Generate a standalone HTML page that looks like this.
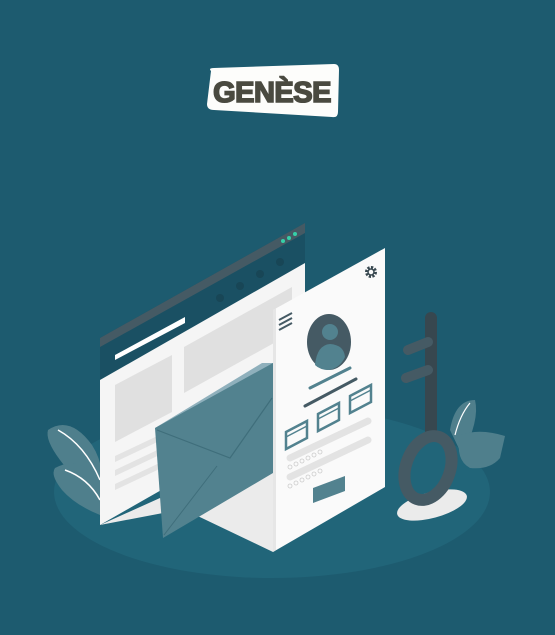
<!DOCTYPE html>
<html><head><meta charset="utf-8"><style>
html,body{margin:0;padding:0;width:555px;height:635px;overflow:hidden;background:#1d5b6f}
</style></head><body>
<svg width="555" height="635" viewBox="0 0 555 635" xmlns="http://www.w3.org/2000/svg">
<rect width="555" height="635" fill="#1d5b6f"/>
<!-- logo -->
<path d="M211 71 Q208 68 214 68 L334 64 Q339 64 339 70 L338 112 Q338 118 332 117 L214 110 Q207 110 207 104 Z" fill="#fdfdfb"/>
<text x="272" y="102" text-anchor="middle" font-family="Liberation Sans, sans-serif" font-weight="bold" font-size="29" fill="#4a4a40" stroke="#4a4a40" stroke-width="1.6" letter-spacing="-0.5">GENÈSE</text>
<!-- platform -->
<ellipse cx="272" cy="492" rx="218" ry="86" fill="#22667a" opacity="0.9"/>
<!-- plants left -->
<path d="M48 430 Q70 415 92 445 Q108 470 100 505 Q75 480 60 460 Q45 440 48 430Z" fill="#4f7f8c"/>
<path d="M55 468 Q80 455 98 480 Q108 500 100 515 Q75 505 62 490 Q50 475 55 468Z" fill="#4f7f8c"/>
<path d="M58 430 Q85 445 100 480" stroke="#fff" stroke-width="1.5" fill="none"/>
<path d="M65 470 Q88 478 100 500" stroke="#fff" stroke-width="1.5" fill="none"/>
<!-- plant right -->
<path d="M450 430 Q455 400 475 400 Q480 420 462 455Z" fill="#4f7f8c"/>
<path d="M460 435 Q480 428 505 436 L500 458 Q490 470 470 468 Q455 460 460 435Z" fill="#4f7f8c"/>
<path d="M470 403 Q460 415 455 435" stroke="#fff" stroke-width="1.2" fill="none"/>
<!-- floor -->
<polygon points="100,525 160,498 273,552 273,470 205,505" fill="#ebebeb"/>
<!-- browser -->
<polygon points="100,338 305,223 305,263 100,380" fill="#1a5063"/>
<polygon points="100,338 305,223 305,233 100,347" fill="#455a64"/>
<circle cx="283" cy="241" r="2" fill="#35d0a8"/><circle cx="289" cy="238" r="2" fill="#35d0a8"/><circle cx="295" cy="234" r="2" fill="#35d0a8"/>
<circle cx="220" cy="298" r="4" fill="#184656"/><circle cx="240" cy="286" r="4" fill="#184656"/><circle cx="260" cy="274" r="4" fill="#184656"/><circle cx="280" cy="262" r="4" fill="#184656"/>
<polygon points="115,355 185,317 185,323 115,360" fill="#fff"/>
<polygon points="100,380 305,263 305,408 100,525" fill="#f5f5f5"/>
<polygon points="115,385 172,355 172,412 115,442" fill="#e0e0e0"/>
<polygon points="184,347 292,287 292,333 184,393" fill="#e0e0e0"/>
<polygon points="115,456 170,430 170,436 115,462" fill="#e3e3e3"/>
<polygon points="115,470 170,444 170,450 115,476" fill="#e3e3e3"/>
<polygon points="115,484 170,458 170,464 115,490" fill="#e3e3e3"/>
<!-- envelope -->
<polygon points="155,428 262,363 273,363 273,395 170,450" fill="#8fb0bc"/>
<polygon points="155,428 273,363 273,473 163,538" fill="#52828f"/>
<polyline points="157,430 230,458 272,398" stroke="#3f6e7b" stroke-width="1.2" fill="none"/>
<line x1="164" y1="535" x2="217" y2="466" stroke="#3f6e7b" stroke-width="1"/>
<!-- card -->
<polygon points="273,310 385,248 385,487 273,552" fill="#fafafa"/>
<polygon points="273,310 276,308 276,550 273,552" fill="#e6e6e6"/>
<g stroke="#455a64" stroke-width="2"><line x1="279" y1="320" x2="292" y2="313"/><line x1="279" y1="325" x2="292" y2="318"/><line x1="279" y1="330" x2="292" y2="323"/></g>
<circle cx="371" cy="272" r="4.5" fill="none" stroke="#37474f" stroke-width="3" stroke-dasharray="2.2 1.3"/>
<circle cx="371" cy="272" r="3" fill="none" stroke="#37474f" stroke-width="1.5"/>
<ellipse cx="329" cy="342" rx="22" ry="28" fill="#455a64"/>
<circle cx="330" cy="332" r="8" fill="#52828f"/>
<path d="M315 365 Q317 345 330 344 Q344 345 345 357 Q340 368 329 370 Q320 370 315 365Z" fill="#52828f"/>
<line x1="310" y1="388" x2="350" y2="368" stroke="#52828f" stroke-width="3" stroke-linecap="round"/>
<line x1="305" y1="406" x2="356" y2="379" stroke="#455a64" stroke-width="3" stroke-linecap="round"/>
<g fill="none" stroke="#52828f" stroke-width="2.5">
<polygon points="286,432 307,421 307,438 286,449"/><polygon points="318,414 339,403 339,420 318,431"/><polygon points="350,396 371,385 371,402 350,413"/>
</g>
<g stroke="#52828f" stroke-width="1.5"><line x1="286" y1="437" x2="307" y2="426"/><line x1="318" y1="419" x2="339" y2="408"/><line x1="350" y1="401" x2="371" y2="390"/></g>
<line x1="290" y1="458" x2="368" y2="421" stroke="#e3e3e3" stroke-width="7" stroke-linecap="round"/>
<line x1="290" y1="477" x2="368" y2="440" stroke="#e3e3e3" stroke-width="7" stroke-linecap="round"/>
<g fill="#fafafa" stroke="#ccc" stroke-width="0.8"><circle cx="290" cy="467" r="2"/><circle cx="296" cy="464" r="2"/><circle cx="302" cy="461" r="2"/><circle cx="308" cy="458" r="2"/><circle cx="314" cy="455" r="2"/><circle cx="320" cy="452" r="2"/><circle cx="290" cy="486" r="2"/><circle cx="296" cy="483" r="2"/><circle cx="302" cy="480" r="2"/><circle cx="308" cy="477" r="2"/><circle cx="314" cy="474" r="2"/><circle cx="320" cy="471" r="2"/></g>
<polygon points="313,488 345,476 345,491 313,503" fill="#52828f"/>
<!-- key -->
<ellipse cx="432" cy="505" rx="36" ry="13" fill="#ebebeb" transform="rotate(-15 432 505)"/>
<line x1="431" y1="318" x2="431" y2="435" stroke="#37474f" stroke-width="12" stroke-linecap="round"/>
<line x1="408" y1="350" x2="428" y2="342" stroke="#455a64" stroke-width="10" stroke-linecap="round"/>
<line x1="406" y1="378" x2="428" y2="370" stroke="#455a64" stroke-width="10" stroke-linecap="round"/>
<ellipse cx="428" cy="468" rx="22" ry="33" fill="none" stroke="#455a64" stroke-width="12" transform="rotate(20 428 468)"/>
</svg>
</body></html>
